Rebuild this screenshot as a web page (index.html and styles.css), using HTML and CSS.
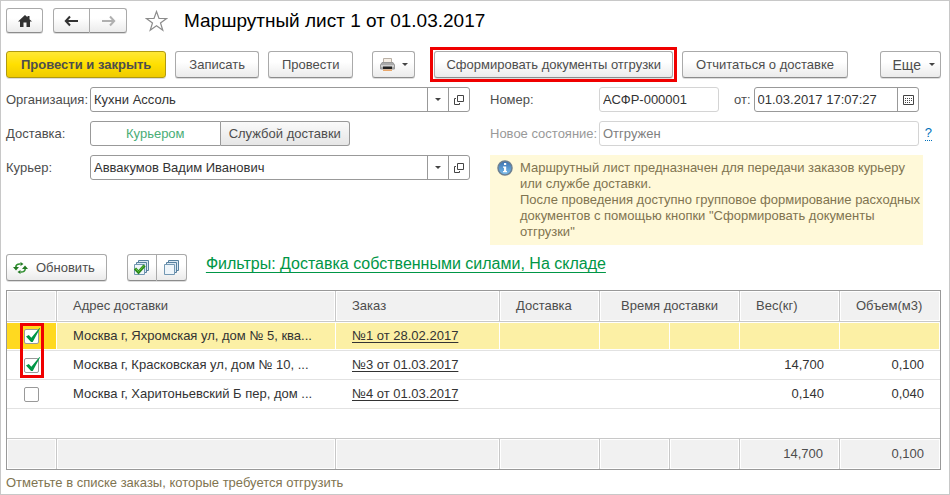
FILE: index.html
```html
<!DOCTYPE html>
<html lang="ru">
<head>
  <meta charset="UTF-8" />
  <title>Маршрутный лист 1 от 01.03.2017</title>
  <link rel="stylesheet" href="styles.css">
</head>
<body>
  <svg class="sprite" aria-hidden="true">
    <symbol id="icon-open" viewBox="0 0 10 10">
      <path d="M3.5 .5h6v6h-6zM2 3.5H.5v6h5V8" fill="none" stroke="#444"/>
    </symbol>
    <symbol id="icon-sheets" viewBox="0 0 17 17">
      <path d="M5.500 1.500h10v10h-10z" fill="#dbe8f2" stroke="#56809f"/>
      <path d="M3.500 3.500h10v10h-10z" fill="#dbe8f2" stroke="#56809f"/>
      <path d="M1.500 5.500h10v10h-10z" fill="#eef5fa" stroke="#7398b3"/>
    </symbol>
  </svg>

  <main class="window">
    <header class="title-bar">
      <button class="btn btn-home" type="button" aria-label="Домой">
        <svg width="16" height="14" viewBox="0 0 16 14"><path d="M8 1L1 7.500h2V13h3.500V8.500h3V13H13V7.500h2L12.500 5.200V2h-2v1.300z" fill="#333"/></svg>
      </button>
      <div class="group">
        <button class="btn btn-nav" type="button" aria-label="Назад">
          <svg width="15" height="12" viewBox="0 0 15 12"><path d="M14 6H2M6 1.500L1.800 6 6 10.500" fill="none" stroke="#333" stroke-width="2"/></svg>
        </button>
        <button class="btn btn-nav" type="button" aria-label="Вперед">
          <svg width="15" height="12" viewBox="0 0 15 12"><path d="M1 6h12M9 1.500L13.200 6 9 10.500" fill="none" stroke="#b0b0b0" stroke-width="2"/></svg>
        </button>
      </div>
      <svg class="star" width="23" height="22" viewBox="0 0 23 22"><path d="M11.500 1.500l2.500 7h7.500l-6 4.500 2.300 7.200-6.300-4.400-6.300 4.400L7.500 13l-6-4.500H9z" fill="#fff" stroke="#8c8c8c" stroke-width="1.200"/></svg>
      <h1>Маршрутный лист 1 от 01.03.2017</h1>
    </header>

    <div class="commands">
      <button class="btn btn-main" type="button">Провести и закрыть</button>
      <button class="btn" type="button">Записать</button>
      <button class="btn" type="button">Провести</button>
      <button class="btn btn-print" type="button" aria-label="Печать">
        <svg width="15" height="14" viewBox="0 0 15 14">
          <path d="M3.500 .5h8v5h-8z" fill="#f6efe6" stroke="#b9b0a6"/>
          <path d="M2 4.500h11l1.500 2.500v4h-14V7z" fill="#aaa" stroke="#999"/>
          <path d="M1 7h13v2H1z" fill="#d0d0d0"/>
          <path d="M3 8.500h9V11H3z" fill="#222"/>
          <path d="M3 11.500h9V13H3z" fill="#e9a76b"/>
        </svg>
        <span class="caret"></span>
      </button>
      <div class="highlight">
        <button class="btn" type="button">Сформировать документы отгрузки</button>
      </div>
      <button class="btn" type="button">Отчитаться о доставке</button>
      <button class="btn btn-more" type="button">Еще <span class="caret"></span></button>
    </div>

    <form class="fields">
      <div class="column">
        <div class="row">
          <label for="org">Организация:</label>
          <div class="field">
            <input id="org" type="text" value="Кухни Ассоль">
            <button type="button" aria-label="Выбрать организацию"><span class="caret"></span></button>
            <button type="button" aria-label="Открыть организацию"><svg width="10" height="10"><use href="#icon-open"/></svg></button>
          </div>
        </div>
        <div class="row">
          <span class="label">Доставка:</span>
          <div class="switch">
            <button class="active" type="button">Курьером</button>
            <button type="button">Службой доставки</button>
          </div>
        </div>
        <div class="row">
          <label for="courier">Курьер:</label>
          <div class="field">
            <input id="courier" type="text" value="Аввакумов Вадим Иванович">
            <button type="button" aria-label="Выбрать курьера"><span class="caret"></span></button>
            <button type="button" aria-label="Открыть курьера"><svg width="10" height="10"><use href="#icon-open"/></svg></button>
          </div>
        </div>
      </div>

      <div class="column">
        <div class="row row-wide">
          <label for="number">Номер:</label>
          <div class="field field-locked field-number">
            <input id="number" type="text" value="АСФР-000001" readonly>
          </div>
          <label class="label-date" for="date">от:</label>
          <div class="field">
            <input id="date" type="text" value="01.03.2017 17:07:27">
            <button type="button" aria-label="Календарь">
              <svg width="11" height="10" viewBox="0 0 11 10"><path d="M.5 .5h10v9H.5z" fill="none" stroke="#444"/><path d="M2 3.500h7M2 5.500h7M2 7.500h5" stroke="#444" stroke-dasharray="1 1"/></svg>
            </button>
          </div>
        </div>
        <div class="row row-wide muted">
          <label for="state">Новое состояние:</label>
          <div class="field field-locked">
            <input id="state" type="text" value="Отгружен" readonly>
          </div>
          <a class="help" href="#">?</a>
        </div>
        <div class="note">
          <svg width="16" height="16" viewBox="0 0 16 16">
            <defs><linearGradient id="info" x2="0" y2="1"><stop stop-color="#3a6fae"/><stop offset="1" stop-color="#7cc0ee"/></linearGradient></defs>
            <circle cx="8" cy="8" r="7" fill="url(#info)" stroke="#6d7f90" stroke-width="1.500"/>
            <path d="M7 3h2.200v2H7zM6 6.500h3.200V11H10v1.300H6V11h1V7.800H6z" fill="#fff"/>
          </svg>
          <p>Маршрутный лист предназначен для передачи заказов курьеру или службе доставки.<br>После проведения доступно групповое формирование расходных документов с помощью кнопки "Сформировать документы отгрузки"</p>
        </div>
      </div>
    </form>

    <div class="list-bar">
      <button class="btn btn-refresh" type="button">
        <svg width="15" height="12" viewBox="0 0 15 12">
          <path d="M2.800 5C3 3 4.500 1.700 7.500 2M12.200 7c-.2 2-1.700 3.300-4.700 3" fill="none" stroke="#2f8f2f" stroke-width="1.600"/>
          <path d="M0 5h6L3 8.500zM9 7h6L12 3.500z" fill="#237a23"/>
          <path d="M7.500 0v4L10.500 2zM7.500 8v4L4.500 10z" fill="#237a23"/>
        </svg>
        Обновить
      </button>
      <div class="group">
        <button class="btn btn-mark" type="button" aria-label="Отметить все">
          <svg width="17" height="17" viewBox="0 0 17 17"><use href="#icon-sheets"/><path d="M2 9.500l3.500 3.800L11.500 6.500" fill="none" stroke="#2c8a1c" stroke-width="3"/><path d="M2.500 9.500l3 3L11 6.500" fill="none" stroke="#63c33f"/></svg>
        </button>
        <button class="btn btn-mark" type="button" aria-label="Снять отметки">
          <svg width="17" height="17"><use href="#icon-sheets"/></svg>
        </button>
      </div>
      <a class="filters" href="#">Фильтры: Доставка собственными силами, На складе</a>
    </div>

    <table class="orders">
      <colgroup>
        <col class="col-check">
        <col>
        <col class="col-order">
        <col class="col-num">
        <col class="col-time">
        <col class="col-time">
        <col class="col-num">
        <col class="col-num">
      </colgroup>
      <thead>
        <tr>
          <th></th>
          <th>Адрес доставки</th>
          <th>Заказ</th>
          <th>Доставка</th>
          <th class="time" colspan="2">Время доставки</th>
          <th>Вес(кг)</th>
          <th>Объем(м3)</th>
        </tr>
      </thead>
      <tbody>
        <tr class="selected">
          <td class="check"><input type="checkbox" aria-label="Заказ №1" checked><span class="mark-frame"></span></td>
          <td>Москва г, Яхромская ул, дом № 5, ква...</td>
          <td><a href="#">№1 от 28.02.2017</a></td>
          <td></td><td></td><td></td><td></td><td></td>
        </tr>
        <tr>
          <td class="check"><input type="checkbox" aria-label="Заказ №3" checked></td>
          <td>Москва г, Красковская ул, дом № 10, ...</td>
          <td><a href="#">№3 от 01.03.2017</a></td>
          <td></td><td></td><td></td>
          <td class="num">14,700</td>
          <td class="num">0,100</td>
        </tr>
        <tr>
          <td class="check"><input type="checkbox" aria-label="Заказ №4"></td>
          <td>Москва г, Харитоньевский Б пер, дом ...</td>
          <td><a href="#">№4 от 01.03.2017</a></td>
          <td></td><td></td><td></td>
          <td class="num">0,140</td>
          <td class="num">0,040</td>
        </tr>
        <tr class="empty"><td colspan="8"></td></tr>
      </tbody>
      <tfoot>
        <tr>
          <td></td><td></td><td></td><td></td><td></td><td></td>
          <td class="num">14,700</td>
          <td class="num">0,100</td>
        </tr>
      </tfoot>
    </table>

    <p class="hint">Отметьте в списке заказы, которые требуется отгрузить</p>
  </main>
</body>
</html>
```

FILE: styles.css
```css
* {
  box-sizing: border-box;
}

body {
  margin: 0;
  background-color: #fff;
  color: #4d4d4d;
  font-family: "Liberation Sans", Arial, sans-serif;
  font-size: 13px;
  line-height: 16px;
}

button,
input {
  font: inherit;
  color: inherit;
}

h1,
p {
  margin: 0;
}

svg {
  flex: none;
}

.sprite {
  display: none;
}

.window {
  min-height: 100vh;
  padding: 7px 8px 1px 5px;
  border: 1px solid #c8c8c8;
}

/* Buttons */

.btn {
  display: flex;
  align-items: center;
  justify-content: center;
  height: 27px;
  padding: 0 13px;
  border: 1px solid #aaa;
  border-bottom-color: #8c8c8c;
  border-radius: 3px;
  background: linear-gradient(#fff 40%, #ebebeb);
  box-shadow: 0 1px 0 #ddd;
  white-space: nowrap;
}

.btn-main {
  padding: 0 14px;
  border-color: #b09a10;
  background: linear-gradient(#ffe836, #ffdf00 50%, #efcb00);
  font-weight: bold;
}

.caret {
  border: 3px solid transparent;
  border-top-color: #444;
  border-bottom: 0;
}

.group {
  display: flex;
}

.group .btn:first-child {
  border-radius: 3px 0 0 3px;
}

.group .btn:last-child {
  border-left: 0;
  border-radius: 0 3px 3px 0;
}

/* Title */

.title-bar {
  display: flex;
  align-items: center;
  gap: 10px;
}

.title-bar .btn {
  height: 25px;
  padding: 0;
}

.btn-home,
.btn-nav {
  width: 37px;
}

.star {
  margin: 0 6px 0 8px;
}

h1 {
  color: #000;
  font-size: 19px;
  font-weight: normal;
  line-height: 24px;
}

/* Commands */

.commands {
  display: flex;
  align-items: center;
  gap: 9px;
  margin-top: 14px;
}

.btn-print {
  gap: 7px;
  margin-left: 10px;
  padding: 0 6px 0 7px;
}

.highlight {
  margin: 0 -4px 0 6px;
  padding: 1px;
  border: 3px solid #f00000;
}

.highlight .btn {
  padding: 0 11px;
}

.btn-more {
  gap: 8px;
  margin-left: auto;
  padding: 0 5px 0 12px;
}

.commands .btn-more {
  font-size: 14px;
}

/* Fields */

.fields {
  display: grid;
  grid-template-columns: minmax(0, 1fr) 451px;
  gap: 20px;
  margin-top: 5px;
}

.column {
  display: flex;
  flex-direction: column;
  gap: 9px;
}

.row {
  display: grid;
  grid-template-columns: 84px minmax(0, 1fr);
  align-items: center;
}

.row-wide {
  display: flex;
  padding-right: 22px;
}

.row-wide > label:first-child {
  width: 109px;
}

.row-wide .label-date {
  margin: 0 3px 0 15px;
}

.muted {
  padding-right: 9px;
  color: #999;
}

.field {
  display: flex;
  flex: 1;
  height: 25px;
  border: 1px solid #999;
  border-radius: 3px;
  background-color: #fff;
  overflow: hidden;
}

.field input {
  flex: 1;
  min-width: 0;
  padding: 0 3px;
  border: 0;
  background: none;
  color: #333;
  outline: 0;
}

.field button {
  display: flex;
  align-items: center;
  justify-content: center;
  width: 21px;
  padding: 0;
  border: 0;
  border-left: 1px solid #999;
  background: none;
}

.field-locked {
  border-color: #d4d4d4;
}

.field-number {
  flex: none;
  width: 120px;
}

.muted .field input {
  color: #808080;
}

.help {
  margin-left: 6px;
  border-bottom: 1px dotted #0070ba;
  color: #0070ba;
  line-height: 14px;
  text-decoration: none;
}

.switch {
  display: flex;
  width: 260px;
  height: 25px;
}

.switch button {
  flex: 1;
  padding: 0;
  border: 1px solid #999;
  border-left: 0;
  border-radius: 0 3px 3px 0;
  background: linear-gradient(#fafafa, #e6e6e6);
}

.switch .active {
  border-left: 1px solid #999;
  border-radius: 3px 0 0 3px;
  background: #fff;
  color: #4aad76;
}

.note {
  display: flex;
  gap: 7px;
  margin-right: 18px;
  padding: 5px 0 5px 7px;
  background-color: #fff9d9;
  color: #7f7450;
}

/* List */

.list-bar {
  display: flex;
  align-items: center;
  margin-top: 9px;
}

.btn-refresh {
  gap: 8px;
  margin-right: 20px;
  padding: 0 11px 0 6px;
}

.btn-mark {
  width: 30px;
  padding: 0;
}

.filters {
  margin: 0 0 7px 19px;
  color: #009646;
  font-size: 16px;
  line-height: 20px;
  text-underline-offset: 3px;
}

.orders {
  width: 100%;
  margin-top: 9px;
  border: 1px solid #999;
  border-spacing: 0;
  table-layout: fixed;
}

.col-check {
  width: 50px;
}

.col-order {
  width: 164px;
}

.col-num {
  width: 100px;
}

.col-time {
  width: 70px;
}

.orders th,
.orders td {
  padding: 0 16px;
  text-align: left;
  white-space: nowrap;
}

.orders th,
.orders tfoot td {
  height: 31px;
  border-right: 1px solid #c8c8c8;
  background-color: #f1f1f1;
  box-shadow: inset 0 0 0 1px #fff;
  font-weight: normal;
}

.orders th {
  border-bottom: 1px solid #c8c8c8;
}

.orders tfoot td {
  border-top: 1px solid #c8c8c8;
}

.orders th:last-child,
.orders tfoot td:last-child {
  border-right: 0;
}

.orders .time {
  padding-left: 21px;
}

.orders tbody td {
  height: 29px;
  border-bottom: 1px solid #e2e2e2;
  color: #333;
}

.orders .empty td {
  border-bottom: 0;
}

.selected td {
  background-color: #fcf0a5;
  box-shadow: inset -1px 0 #fff, inset 0 1px #fff, inset 0 -1px #fff;
}

.selected .check {
  background-color: #ffd920;
}

.orders .check {
  position: relative;
  padding: 0 1px 0 0;
  text-align: center;
}

.orders .num {
  text-align: right;
}

.orders td a {
  color: #333;
  text-underline-offset: 2px;
}

.check input {
  position: relative;
  width: 15px;
  height: 15px;
  margin: 0;
  border: 1px solid #999;
  border-radius: 2px;
  background-color: #fff;
  appearance: none;
  vertical-align: middle;
}

.check input:checked::before {
  content: "";
  position: absolute;
  top: -2px;
  left: 1px;
  width: 14px;
  height: 14px;
  background-color: #009646;
  clip-path: polygon(0 60%, 20% 50%, 38% 70%, 96% 0, 100% 4%, 48% 100%, 36% 100%);
}

/* Frame round the ticked orders */
.mark-frame {
  position: absolute;
  z-index: 1;
  top: 1px;
  left: 13px;
  width: 24px;
  height: 55px;
  border: 3px solid #f00000;
}

.hint {
  margin-top: 5px;
  color: #7f7450;
}
```
